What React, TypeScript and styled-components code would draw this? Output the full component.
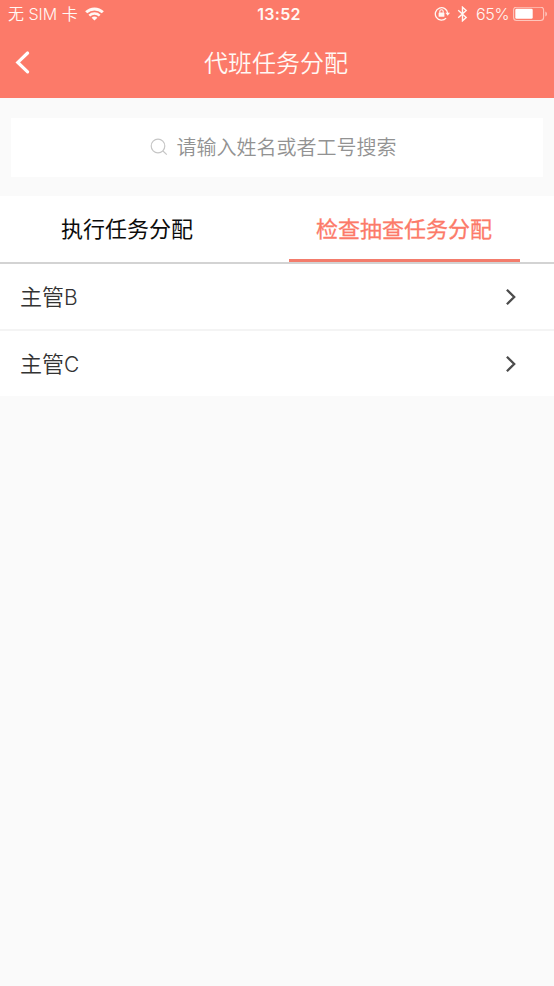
import React, { useState } from 'react';
import styled, { createGlobalStyle } from 'styled-components';

const CORAL = '#fc7a69';

const GlobalStyle = createGlobalStyle`
  * { box-sizing: border-box; }
  body {
    margin: 0;
    background: #fafafa;
    font-family: Inter, "Noto Sans CJK SC", sans-serif;
  }
  button { font: inherit; border: 0; padding: 0; background: none; cursor: pointer; }
`;

const Screen = styled.div`
  display: flex;
  flex-direction: column;
  min-height: 986px;
  background: #fafafa;
`;

const Header = styled.header`
  height: 98px;
  background: ${CORAL};
  color: #fff8f4;
`;

const StatusBar = styled.div`
  display: grid;
  grid-template-columns: 1fr auto 1fr;
  align-items: center;
  height: 28px;
  padding: 0 6px 0 8px;
  font-size: 16px;
  line-height: 28px;
  white-space: nowrap;
`;

const Carrier = styled.div`
  display: flex;
  align-items: center;
  gap: 7px;
  font-weight: 350;
`;

const Clock = styled.div`
  padding-left: 2px;
  font-size: 16px;
  font-weight: 600;
  letter-spacing: 0.3px;
`;

const Indicators = styled.div`
  display: flex;
  align-items: center;
  justify-content: flex-end;
  font-weight: 350;
`;

const Percent = styled.span`
  margin: 0 4px 0 8px;
  letter-spacing: -0.4px;
`;

const LockIcon = styled.svg`
  margin-right: 7px;
`;

const NavBar = styled.div`
  display: grid;
  grid-template-columns: 48px 1fr 48px;
  align-items: center;
  height: 70px;
`;

const BackButton = styled.button`
  display: flex;
  align-items: center;
  height: 48px;
  padding-left: 14px;
  color: #fff;
`;

const Title = styled.h1`
  margin: 0;
  padding: 1px 2px 0 0;
  font-size: 24px;
  font-weight: 350;
  line-height: 36px;
  text-align: center;
`;

const SearchArea = styled.div`
  height: 98px;
  padding: 20px 11px 19px;
`;

const SearchBox = styled.div`
  display: flex;
  align-items: center;
  justify-content: center;
  gap: 9px;
  height: 59px;
  padding: 0 8px 2px 0;
  background: #fff;
  color: #929292;
  font-size: 20px;
  font-weight: 350;
`;

const Tabs = styled.nav`
  display: flex;
  height: 68px;
  background: #fff;
  border-bottom: 2px solid #d3d3d3;
`;

const Tab = styled.button<{ $active: boolean }>`
  display: flex;
  flex: 1;
  flex-direction: column;
  align-items: center;
  justify-content: flex-end;
  height: 66px;
  color: ${({ $active }) => ($active ? CORAL : '#0b0b0b')};
  font-size: 22px;
  font-weight: 400;
  -webkit-text-stroke: ${({ $active }) => ($active ? '0.3px' : '0')} currentColor;
  line-height: 32px;

  &:first-child {
    flex: 0 0 254px;
  }

  &::after {
    content: '';
    width: 231px;
    height: 3px;
    margin-top: 14px;
    background: ${({ $active }) => ($active ? '#f37c6c' : 'transparent')};
  }
`;

const List = styled.ul`
  margin: 0;
  padding: 0;
  list-style: none;
  background: #fff;
`;

const Row = styled.li`
  display: flex;
  align-items: center;
  justify-content: space-between;
  height: 65px;
  padding: 0 37px 0 20px;
  color: #333;
  font-size: 22px;
  line-height: 32px;

  & + & {
    height: 67px;
    border-top: 2px solid #f4f4f4;
  }
`;

const RowName = styled.span`
  padding-top: 1px;
  font-size: 22px;
  font-weight: 350;
`;

const LatinSuffix = styled.span`
  font-size: 21px;
  letter-spacing: -0.5px;
`;

const WifiGlyph = () => (
  <svg width="19" height="14" viewBox="0 0 19 14" fill="none" stroke="currentColor" strokeWidth="3">
    <path d="M1.2 5.3C5.8 0.8 13.2 0.8 17.8 5.3" />
    <path d="M4.3 8.6C7.2 5.9 11.8 5.9 14.7 8.6" strokeWidth="2.5" />
    <path d="M9.5 13.6L6.6 10.7C8.2 9.2 10.8 9.2 12.4 10.7Z" fill="currentColor" stroke="none" />
  </svg>
);

const RotationLockGlyph = () => (
  <LockIcon width="16" height="16" viewBox="0 0 16 16" fill="none" stroke="currentColor">
    <path d="M12.1 12.1A6.2 6.2 0 1 1 13.7 7.2" strokeWidth="1.3" />
    <path d="M11.4 6.8H16L13.7 9.8Z" fill="currentColor" stroke="none" />
    <rect x="4.6" y="6.5" width="5.8" height="4.2" rx="0.5" fill="currentColor" stroke="none" />
    <path d="M5.8 6.7V5.4A1.7 1.7 0 0 1 9.2 5.4V6.7" strokeWidth="1.1" />
  </LockIcon>
);

const BluetoothGlyph = () => (
  <svg width="11" height="16" viewBox="0 0 11 16" fill="none" stroke="currentColor" strokeWidth="1.4">
    <path d="M1.2 4.2L9.2 11.4L5.5 14.8V1.2L9.2 4.6L1.2 11.8" />
  </svg>
);

const BatteryGlyph = () => (
  <svg width="35" height="15" viewBox="0 0 35 15">
    <rect x="0.6" y="0.1" width="30" height="13.4" rx="3" fill="none" stroke="currentColor" strokeOpacity="0.6" strokeWidth="1.1" />
    <rect x="2.3" y="1.8" width="17.4" height="10" rx="1.3" fill="#fff" />
    <path d="M32.3 4.5V9.5C34.5 8.7 34.5 5.3 32.3 4.5Z" fill="currentColor" fillOpacity="0.6" />
  </svg>
);

const BackGlyph = () => (
  <svg width="18" height="26" viewBox="0 0 18 26" fill="none" stroke="currentColor" strokeWidth="3.2" strokeLinecap="round">
    <path d="M13.6 3L3.8 12.4L13.6 21.8" />
  </svg>
);

const SearchGlyph = () => (
  <svg width="18" height="18" viewBox="0 0 18 18" fill="none" stroke="#c6c6c6" strokeWidth="1.2">
    <circle cx="8" cy="8" r="6.8" />
    <path d="M12.7 12.8L16.8 16.6" />
  </svg>
);

const ChevronGlyph = () => (
  <svg width="13" height="18" viewBox="0 0 13 18" fill="none" stroke="#4c4c4c" strokeWidth="2.3">
    <path d="M2.9 1.8L10.2 9L2.9 16.2" />
  </svg>
);

const tabs = ['执行任务分配', '检查抽查任务分配'];

const people = ['B', 'C'];

export default function App() {
  const [active, setActive] = useState(1);

  return (
    <Screen>
      <GlobalStyle />
      <Header>
        <StatusBar>
          <Carrier>
            <span>无 SIM 卡</span>
            <WifiGlyph />
          </Carrier>
          <Clock>13:52</Clock>
          <Indicators>
            <RotationLockGlyph />
            <BluetoothGlyph />
            <Percent>65%</Percent>
            <BatteryGlyph />
          </Indicators>
        </StatusBar>
        <NavBar>
          <BackButton aria-label="返回">
            <BackGlyph />
          </BackButton>
          <Title>代班任务分配</Title>
        </NavBar>
      </Header>
      <SearchArea>
        <SearchBox>
          <SearchGlyph />
          <span>请输入姓名或者工号搜索</span>
        </SearchBox>
      </SearchArea>
      <Tabs>
        {tabs.map((label, i) => (
          <Tab key={label} $active={i === active} onClick={() => setActive(i)}>
            {label}
          </Tab>
        ))}
      </Tabs>
      <List>
        {people.map((suffix) => (
          <Row key={suffix}>
            <RowName>
              主管<LatinSuffix>{suffix}</LatinSuffix>
            </RowName>
            <ChevronGlyph />
          </Row>
        ))}
      </List>
    </Screen>
  );
}
